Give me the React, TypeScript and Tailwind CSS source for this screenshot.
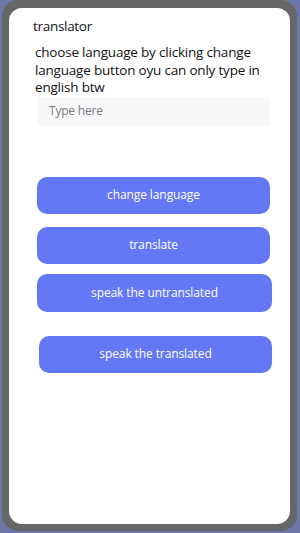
export default function App() {
  const font = { fontFamily: '"Open Sans", "Noto Sans", sans-serif' };
  return (
    <div className="w-[300px] h-[533px] bg-[#6c76a8] overflow-hidden" style={font}>
      <div className="ml-[2px] w-[295px] h-[531px] bg-[#676767] rounded-[16px] pt-[8px] px-[7px] pb-[7px]">
        <div className="bg-white rounded-[13px] h-full flex flex-col">
          <div className="pl-[24px] pt-[8px] text-[13.5px] leading-[20px] text-[#111] tracking-[-0.3px]">translator</div>
          <div className="pl-[26px] pr-[10px] mt-[8px] text-[13.5px] leading-[17.5px] text-[#111] tracking-[-0.2px]">
            choose language by clicking change language button oyu can only type in english btw
          </div>
          <div className="ml-[28px] mr-[20px] mt-[0px] h-[29px] bg-[#f7f8fa] rounded-[3px] flex items-center pl-[12px] text-[12px] text-[#7a7a7a] tracking-[-0.2px]">
            Type here
          </div>
          <div className="flex flex-col ml-[28px] mr-[20px] mt-[51px]">
            <button className="h-[37px] rounded-[10px] bg-[#6478f6] text-white text-[12px] tracking-[-0.1px]">change language</button>
            <button className="mt-[13px] h-[37px] rounded-[10px] bg-[#6478f6] text-white text-[12px] tracking-[-0.1px]">translate</button>
            <button className="mt-[10px] h-[38px] mr-[-2px] rounded-[10px] bg-[#6478f6] text-white text-[12px] tracking-[-0.1px]">speak the untranslated</button>
            <button className="mt-[24px] h-[37px] ml-[2px] mr-[-2px] rounded-[10px] bg-[#6478f6] text-white text-[12px] tracking-[-0.1px]">speak the translated</button>
          </div>
        </div>
      </div>
    </div>
  );
}
